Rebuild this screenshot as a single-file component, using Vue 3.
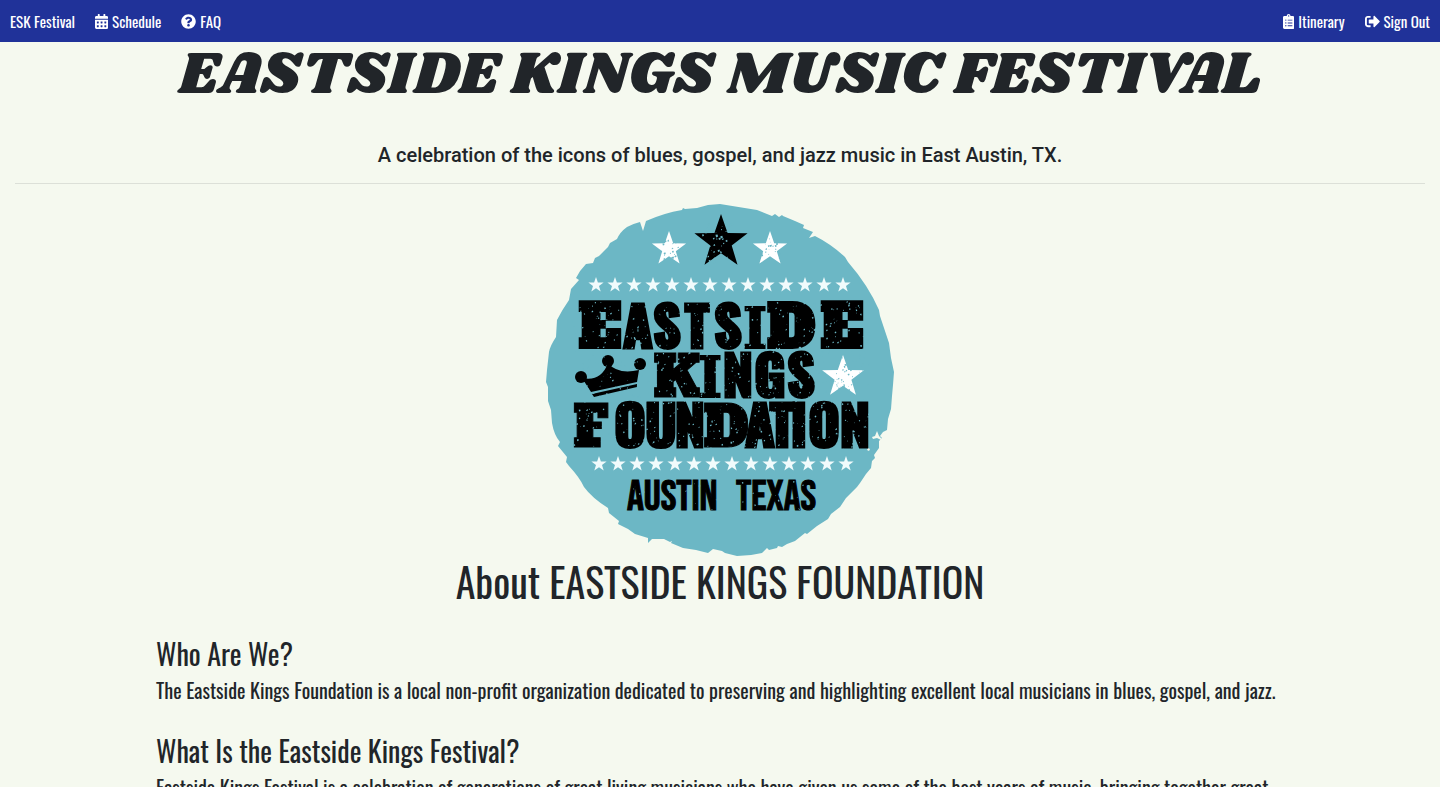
<script setup>
const cell = (x, y) =>
  `M${x} ${y}c0-6.6 5.4-12 12-12h40c6.6 0 12 5.4 12 12v40c0 6.6-5.4 12-12 12h-40c-6.6 0-12-5.4-12-12z`
const dot = y => `M96 ${y + 24}c-13.3 0-24-10.7-24-24s10.7-24 24-24 24 10.7 24 24-10.7 24-24 24z`
const bar = y =>
  `M320 ${y}c0 4.400-3.600 8-8 8H168c-4.400 0-8-3.600-8-8v-16c0-4.400 3.600-8 8-8h144c4.400 0 8 3.600 8 8z`

const icons = {
  calendar: {
    w: 448,
    d: 'M0 464c0 26.500 21.500 48 48 48h352c26.500 0 48-21.500 48-48V192H0z' +
      [64, 192, 320].map(x => cell(x, 268) + cell(x, 396)).join('') +
      'M400 64h-48V16c0-8.800-7.200-16-16-16h-32c-8.800 0-16 7.200-16 16v48H160V16c0-8.800-7.200-16-16-16h-32c-8.800 0-16 7.200-16 16v48H48C21.500 64 0 85.500 0 112v48h448v-48c0-26.500-21.500-48-48-48z',
  },
  question: {
    w: 512,
    d: 'M504 256c0 136.997-111.043 248-248 248S8 392.997 8 256C8 119.083 119.043 8 256 8s248 111.083 248 248zM262.655 90c-54.497 0-89.255 22.957-116.549 63.758-3.536 5.286-2.353 12.415 2.715 16.258l34.699 26.310c5.205 3.947 12.621 3.008 16.665-2.122 17.864-22.658 30.113-35.797 57.303-35.797 20.429 0 45.698 13.148 45.698 32.958 0 14.976-12.363 22.667-32.534 33.976C247.128 238.528 216 254.941 216 296v4c0 6.627 5.373 12 12 12h56c6.627 0 12-5.373 12-12v-1.333c0-28.462 83.186-29.647 83.186-106.667 0-58.002-60.165-102-116.531-102zM256 338c-25.365 0-46 20.635-46 46 0 25.364 20.635 46 46 46s46-20.636 46-46c0-25.365-20.635-46-46-46z',
  },
  clipboard: {
    w: 384,
    d: 'M336 64h-80c0-35.300-28.700-64-64-64s-64 28.700-64 64H48C21.500 64 0 85.500 0 112v352c0 26.500 21.500 48 48 48h288c26.500 0 48-21.500 48-48V112c0-26.500-21.500-48-48-48z' +
      [400, 304, 208].map(y => dot(y) + bar(y + 8)).join('') +
      'M192 40c13.300 0 24 10.700 24 24s-10.700 24-24 24-24-10.700-24-24 10.700-24 24-24z',
  },
  signOut: {
    w: 512,
    d: 'M497 273L329 441c-15 15-41 4.500-41-17v-96H152c-13.300 0-24-10.700-24-24v-96c0-13.300 10.700-24 24-24h136V88c0-21.400 25.900-32 41-17l168 168c9.300 9.400 9.300 24.600 0 34zM192 436v-40c0-6.600-5.400-12-12-12H96c-17.700 0-32-14.300-32-32V160c0-17.700 14.300-32 32-32h84c6.600 0 12-5.400 12-12V76c0-6.600-5.400-12-12-12H96c-53 0-96 43-96 96v192c0 53 43 96 96 96h84c6.600 0 12-5.400 12-12z',
  },
}

const leftLinks = [
  { label: 'ESK Festival' },
  { label: 'Schedule', icon: icons.calendar },
  { label: 'FAQ', icon: icons.question },
]
const rightLinks = [
  { label: 'Itinerary', icon: icons.clipboard },
  { label: 'Sign Out', icon: icons.signOut },
]

const sections = [
  {
    title: 'Who Are We?',
    body: 'The Eastside Kings Foundation is a local non-profit organization dedicated to preserving and highlighting excellent local musicians in blues, gospel, and jazz.',
  },
  {
    title: 'What Is the Eastside Kings Festival?',
    body: 'Eastside Kings Festival is a celebration of generations of great living musicians who have given us some of the best years of music, bringing together great',
  },
]

// Five-pointed star around (cx, cy).
function star(cx, cy, r) {
  const pts = []
  for (let i = 0; i < 10; i++) {
    const rad = i % 2 ? r * 0.4 : r
    const a = -Math.PI / 2 + (i * Math.PI) / 5
    pts.push(`${(cx + rad * Math.cos(a)).toFixed(1)},${(cy + rad * Math.sin(a)).toFixed(1)}`)
  }
  return pts.join(' ')
}
const smallStars = []
for (let i = 0; i < 14; i++) {
  smallStars.push(star(596 + i * 19, 285, 8), star(599 + i * 19, 464, 8))
}
const whiteStars = [star(669, 249, 18), star(770, 249, 18), star(843, 377, 22)]

// Worn-print flecks, from a seeded generator so they never move.
let seed = 7
const rand = () => {
  seed = (seed * 16807) % 2147483647
  return seed / 2147483647
}
function flecks(n, x, y, w, h, max) {
  let d = ''
  for (let i = 0; i < n; i++) {
    const px = x + rand() * w
    const py = y + rand() * h
    const s = 0.4 + rand() * max
    d += `M${px.toFixed(1)} ${py.toFixed(1)}l${s.toFixed(1)} ${(-s * rand()).toFixed(1)}l${(s * 0.3).toFixed(1)} ${s.toFixed(1)}l${(-s).toFixed(1)} ${(s * 0.4).toFixed(1)}z`
  }
  return d
}
const wear =
  flecks(850, 572, 302, 298, 148, 1.1) +
  flecks(40, 626, 480, 190, 30, 1) +
  flecks(45, 702, 222, 30, 40, 1.8) +
  flecks(22, 660, 238, 20, 22, 1.3) +
  flecks(22, 761, 238, 20, 22, 1.3) +
  flecks(28, 832, 364, 20, 26, 1.3)

// Logo lettering: [letter, centre x, style] on a shared baseline.
const words = [
  { y: 348, runs: [['E', 600, 'slab'], ['A', 638, 'block'], ['S', 667, 'block'], ['T', 697, 'block'], ['S', 728, 'block'], ['I', 755, 'thin'], ['D', 791, 'slab'], ['E', 842, 'slab']] },
  { y: 397, runs: [['K', 677, 'slim'], ['I', 710, 'thin'], ['N', 738, 'block'], ['G', 770, 'block'], ['S', 801, 'block']] },
  { y: 447, runs: [['F', 591, 'slim'], ['O', 630, 'block'], ['U', 661, 'block'], ['N', 690, 'block'], ['D', 726, 'slim'], ['A', 760, 'block'], ['T', 782, 'block'], ['I', 799, 'block'], ['O', 824, 'block'], ['N', 855, 'block']] },
]
</script>

<template>
  <nav class="nav" aria-label="Main">
    <div v-for="(group, g) in [leftLinks, rightLinks]" :key="g" class="group">
      <a v-for="link in group" :key="link.label" href="#" class="link">
        <svg v-if="link.icon" class="icon" :viewBox="`0 0 ${link.icon.w} 512`" aria-hidden="true">
          <path :d="link.icon.d" fill-rule="evenodd" />
        </svg>
        {{ link.label }}
      </a>
    </div>
  </nav>

  <header class="hero">
    <h1 class="title">EASTSIDE KINGS MUSIC FESTIVAL</h1>
    <p class="tagline">A celebration of the icons of blues, gospel, and jazz music in East Austin, TX.</p>
    <hr class="rule" />
  </header>

  <main class="about">
    <svg class="logo" viewBox="540 200 360 357" role="img" aria-label="Eastside Kings Foundation, Austin Texas">
      <path
        class="disc"
        d="M720 204 L708 205 L697 208 L685 209 L683 208 L682 210 Q664 213 646 221 L643 231 L640 222 Q632 224 627 227 Q620 232 617 239 L610 243 L608 247 L604 251 L599 256 L595 258 L593 263 L586 264 Q580 270 576 278 L579 280 L571 289 L569 300 Q562 310 557 320 L556 337 Q550 346 549 352 L547 370 L546 382 L548 387 L548 401 L551 410 L552 423 Q554 435 560 442 L558 446 L567 457 L566 462 L569 466 Q580 478 584 487 Q592 498 608 508 L609 513 L619 521 L618 524 L628 529 L635 534 L648 538 L648 543 L652 539 L664 539 L670 542 L672 541 L671 543 L683 548 L696 550 L708 553 L713 549 L722 551 L725 553 L737 556 Q750 556 762 553 L767 548 L769 550 L777 548 L778 546 L782 547 L787 544 L795 541 L805 533 L807 534 L817 526 L828 519 L831 514 L840 507 L846 498 L857 487 L860 483 L866 474 L871 468 L872 461 L875 458 L874 455 L879 448 L879 441 L882 438 L880 436 L883 432 L887 430 L888 419 L891 409 L892 396 L893 385 L894 372 L891 358 L889 343 L884 328 L882 322 L880 316 L879 310 Q868 285 848 262 L845 257 Q831 244 815 236 L809 238 L813 232 L803 228 L804 225 L795 221 L783 216 L782 215 L779 217 L775 214 L772 216 L757 210 Z"
      />
      <path class="chip" d="M872 437l3-1 2-5 2 5 3 3-1 1-4-2-4 1z M868 448l2 1-1 2-2-1z" />
      <polygon class="ink" :points="star(721, 242, 28)" />
      <polygon v-for="p in whiteStars" :key="p" class="white" :points="p" />
      <polygon v-for="p in smallStars" :key="p" class="pale" :points="p" />
      <text v-for="word in words" :key="word.y" class="ink word" :y="word.y">
        <tspan v-for="run in word.runs" :key="run[1]" :class="run[2]" :x="run[1]">{{ run[0] }}</tspan>
      </text>
      <text class="ink town" x="627" y="510">AUSTIN</text>
      <text class="ink town" x="736" y="510">TEXAS</text>
      <g class="ink">
        <circle cx="581" cy="377" r="6" />
        <circle cx="608" cy="361" r="6" />
        <circle cx="640" cy="364" r="6" />
        <path d="M582 378 Q601 382 608 363 Q618 375 639 370 L637 382 L591 392 Z" />
        <path d="M592 394 L637 384 L637 387 L594 397 Z" />
      </g>
      <path class="disc" :d="wear" />
    </svg>

    <h2 class="heading">About EASTSIDE KINGS FOUNDATION</h2>
    <section v-for="s in sections" :key="s.title" class="section">
      <h3>{{ s.title }}</h3>
      <p>{{ s.body }}</p>
    </section>
  </main>
</template>

<style>
body {
  background: #f5f9ef;
}
</style>

<style scoped>
.nav {
  display: flex;
  justify-content: space-between;
  padding: 0 10px;
  background: #203299;
  font: 400 15px/42px Oswald, "Roboto Condensed", sans-serif;
}
.group {
  display: flex;
  gap: 20px;
}
.link {
  display: flex;
  align-items: center;
  gap: 4px;
  color: #fff;
  text-decoration: none;
}
.icon {
  height: 15px;
  fill: #fff;
}
.hero {
  padding: 0 15px;
  color: #212529;
  text-align: center;
}
.title {
  margin: 0;
  font: 400 60px/66px Shrikhand, "DejaVu Serif", serif;
}
.tagline {
  margin: 33px 0 0;
  font: 500 20px/28px Roboto, sans-serif;
}
.rule {
  margin: 14px 0 16px;
  border: 0;
  border-top: 1px solid #dce0d8;
}
.about {
  display: flex;
  flex-direction: column;
  padding: 0 156px;
  color: #212529;
  font-family: Oswald, "Roboto Condensed", sans-serif;
}
.logo {
  align-self: center;
  width: 360px;
  max-width: 100%;
}
.disc {
  fill: #6cb7c5;
}
.chip {
  fill: #f5f9ef;
}
.ink {
  fill: #000;
}
.white {
  fill: #fff;
}
.pale {
  fill: #f1fbfc;
}
.word {
  text-anchor: middle;
  stroke: #000;
}
.slab {
  font: 400 60px "Alfa Slab One", "DejaVu Serif", serif;
  stroke-width: 2px;
}
.slim {
  font: 400 56px "Alfa Slab One", "DejaVu Serif Condensed", serif;
}
.thin {
  font: 700 56px "DejaVu Serif Condensed", "DejaVu Serif", serif;
  stroke-width: 2px;
}
.block {
  font: 700 54px Oswald, sans-serif;
  stroke-width: 3px;
}
.town {
  font: 400 42px "Bebas Neue", Oswald, sans-serif;
  stroke: #000;
  stroke-width: 1px;
}
.heading {
  margin: 0 0 32px;
  font-weight: 400;
  font-size: 40px;
  line-height: 48px;
  text-align: center;
}
.section {
  margin-bottom: 28px;
}
.section h3 {
  margin: 0 0 4px;
  font-weight: 400;
  font-size: 28px;
  line-height: 34px;
}
.section p {
  margin: 0;
  font-size: 20px;
  line-height: 31px;
}
</style>
